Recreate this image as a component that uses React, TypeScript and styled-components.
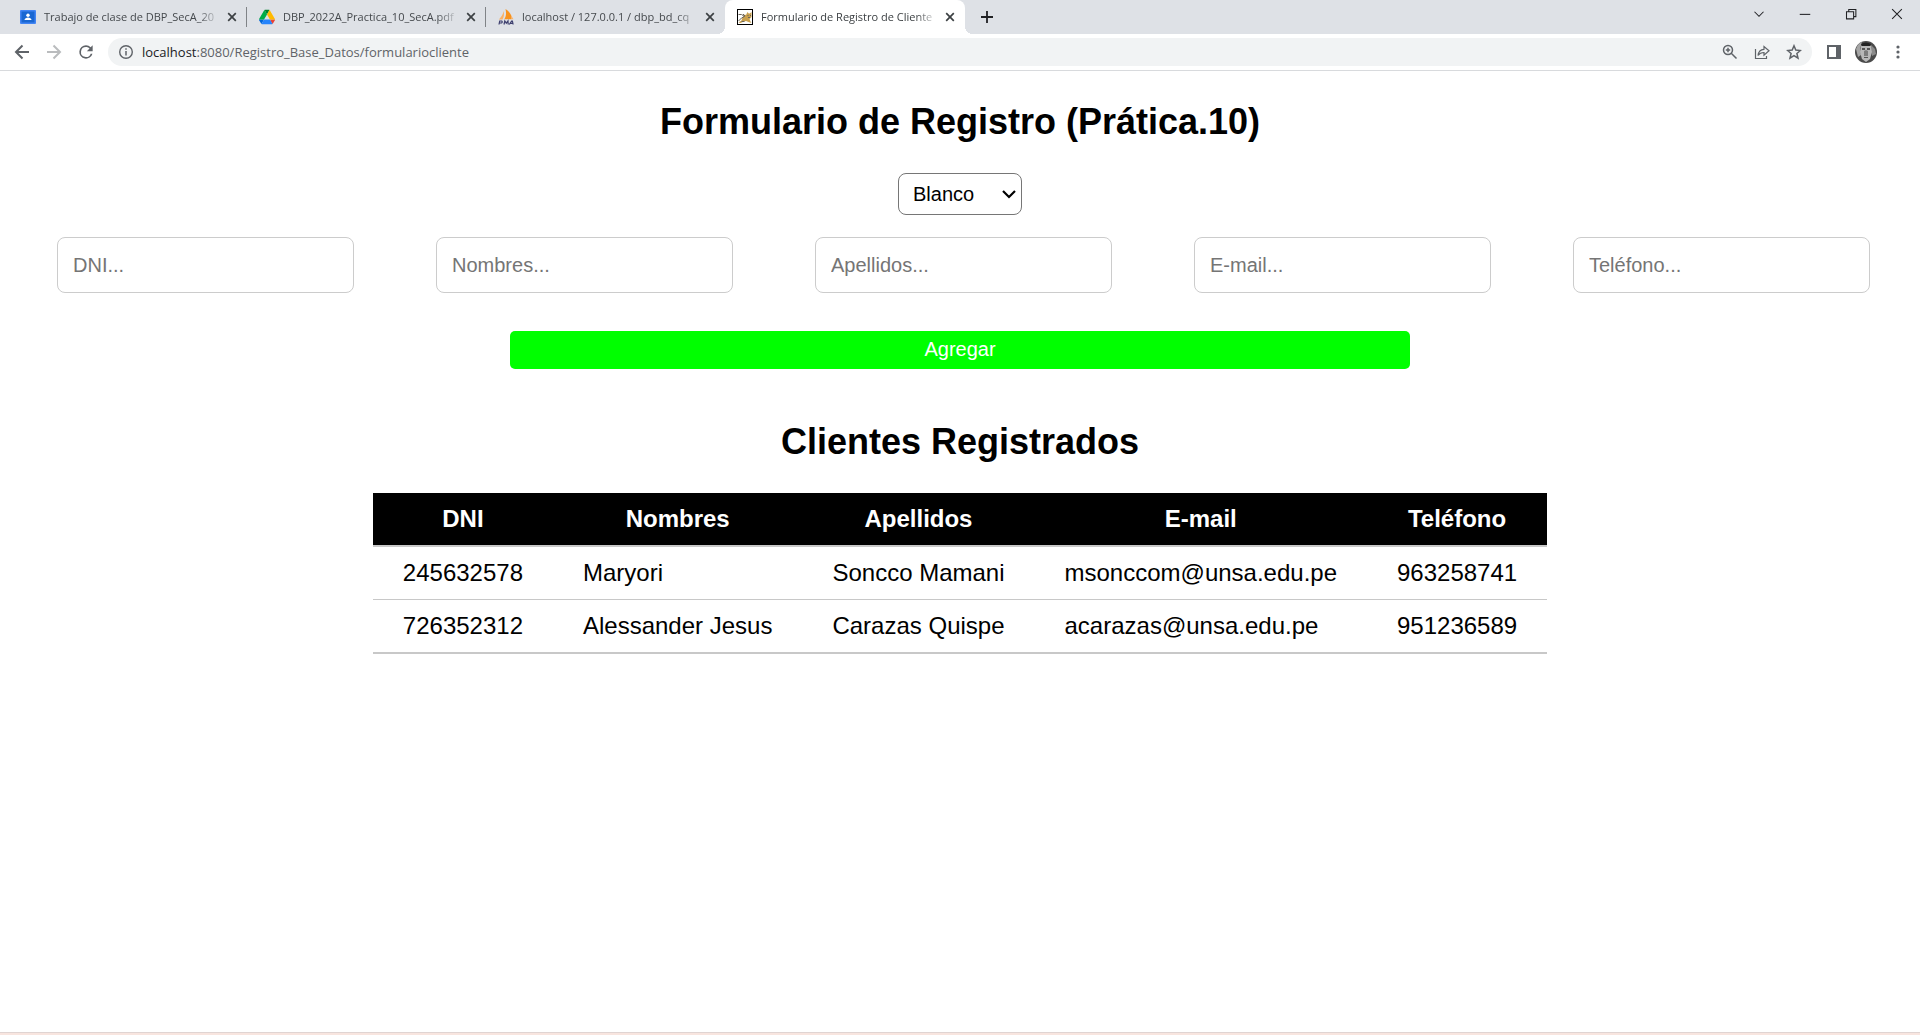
import React from "react";
import styled, { createGlobalStyle, css } from "styled-components";

const GlobalStyle = createGlobalStyle`
  * { box-sizing: border-box; }
  body {
    margin: 0;
    background: #fff;
    color: #000;
    font-family: "Liberation Sans", Arial, sans-serif;
  }
`;

const Window = styled.div`
  display: flex;
  flex-direction: column;
  min-height: 100vh;
`;

const TabStrip = styled.nav`
  display: flex;
  align-items: stretch;
  height: 34px;
  padding-left: 8px;
  background: #dee1e6;
  font: 12px/16px "Open Sans", "Segoe UI", sans-serif;
`;

const Tab = styled.div<{ $active?: boolean; $divided?: boolean }>`
  position: relative;
  display: flex;
  align-items: center;
  flex: 0 1 239px;
  min-width: 0;
  padding: 0 7px 0 12px;
  color: ${(p) => (p.$active ? "#3c4043" : "#45494d")};
  ${(p) =>
    p.$active &&
    css`
      flex-basis: 240px;
      background: #fff;
      border-radius: 8px 8px 0 0;
      &::before,
      &::after {
        content: "";
        position: absolute;
        bottom: 0;
        width: 8px;
        height: 8px;
      }
      &::before {
        right: 100%;
        background: radial-gradient(circle at 0 0, transparent 8px, #fff 8px);
      }
      &::after {
        left: 100%;
        background: radial-gradient(circle at 100% 0, transparent 8px, #fff 8px);
      }
    `}
  ${(p) =>
    p.$divided &&
    css`
      &::after {
        content: "";
        position: absolute;
        right: 0;
        top: 7px;
        width: 1px;
        height: 20px;
        background: #808387;
      }
    `}
`;

const TabTitle = styled.span`
  flex: 1;
  min-width: 0;
  margin: 0 4px 0 8px;
  overflow: hidden;
  white-space: nowrap;
  font-size: 11px;
  mask-image: linear-gradient(to right, #000 calc(100% - 22px), transparent);
`;

const IconButton = styled.button<{ $width?: number; $dim?: boolean }>`
  display: inline-flex;
  align-items: center;
  justify-content: center;
  flex: none;
  width: ${(p) => p.$width ?? 32}px;
  height: 100%;
  padding: 0;
  border: 0;
  background: none;
  color: ${(p) => (p.$dim ? "#babcbe" : "#5f6368")};
`;

const DarkButton = styled(IconButton)`
  color: #202124;
`;

const WindowControls = styled.div`
  display: flex;
  margin-left: auto;
  height: 28px;
`;

const Toolbar = styled.div`
  display: flex;
  align-items: center;
  height: 37px;
  padding: 0 6px;
  border-bottom: 1px solid #d8dadd;
`;

const AddressBar = styled.div`
  display: flex;
  align-items: center;
  flex: 1;
  height: 28px;
  margin: 0 6px;
  padding: 0 2px 0 10px;
  border-radius: 14px;
  background: #f1f3f4;
  color: #5f6368;
`;

const Address = styled.a`
  flex: 1;
  margin-left: 8px;
  color: #5f6368;
  text-decoration: none;
  font: 13px/18px "Open Sans", "Segoe UI", sans-serif;
  strong {
    font-weight: 400;
    color: #202124;
  }
`;

const Page = styled.main`
  flex: 1;
  padding: 30px 12px 0;
`;

const Heading = styled.h2`
  margin: 0;
  font-size: 36px;
  line-height: 42px;
  text-align: center;
`;

const ThemePicker = styled.div`
  display: grid;
  grid-template-columns: 124px;
  justify-content: center;
  align-items: center;
  margin: 30px 0 22px;
  > * {
    grid-area: 1 / 1;
  }
  svg {
    justify-self: end;
    margin-right: 6px;
    pointer-events: none;
  }
`;

const ThemeSelect = styled.select`
  appearance: none;
  width: 100%;
  height: 42px;
  padding: 0 30px 0 14px;
  border: 1px solid #767676;
  border-radius: 8px;
  background: #fff;
  color: #000;
  font: 20px/24px "Liberation Sans", Arial, sans-serif;
`;

const Fields = styled.div`
  display: grid;
  grid-template-columns: repeat(5, 1fr);
  margin-right: -3px;
  padding-left: 4px;
`;

const Field = styled.input`
  justify-self: center;
  width: 297px;
  max-width: 90%;
  height: 56px;
  padding: 0 15px;
  border: 1px solid #ccc;
  border-radius: 8px;
  background: #fff;
  color: #000;
  font: 20px/24px "Liberation Sans", Arial, sans-serif;
  &::placeholder {
    color: #757575;
    opacity: 1;
  }
`;

const SubmitButton = styled.button`
  display: block;
  width: 900px;
  max-width: 100%;
  height: 38px;
  margin: 38px auto 52px;
  padding: 0 0 2px;
  border: 0;
  border-radius: 5px;
  background: #0f0;
  color: #fff;
  font: 20px/24px "Liberation Sans", Arial, sans-serif;
`;

const ClientTable = styled.table`
  margin: 30px auto 0;
  border-spacing: 0;
  font-size: 24px;
  line-height: 28px;
  th,
  td {
    padding: 12px 30px;
  }
  thead th {
    background: #000;
    background-clip: padding-box;
    color: #fff;
    border-bottom: 2px solid #c8c8c8;
  }
  td {
    border-bottom: 1px solid #c8c8c8;
  }
  tbody tr:last-child td {
    border-bottom-width: 2px;
  }
`;

const DesktopEdge = styled.footer`
  height: 3px;
  border-top: 1px solid #e0d4d2;
  background: #f8e5df;
`;

const CloseIcon = () => (
  <svg width="10" height="10" viewBox="0 0 10 10" stroke="#3c4043" strokeWidth="1.7" fill="none">
    <path d="M1.2 1.2l7.6 7.6M8.800 1.200l-7.600 7.600" />
  </svg>
);

const ClassroomIcon = () => (
  <svg width="16" height="16" viewBox="0 0 16 16">
    <rect y="1" width="16" height="14" rx="1" fill="#4285f4" />
    <rect x="1.500" y="2.500" width="13" height="11" fill="#1967d2" />
    <circle cx="8" cy="6.300" r="1.700" fill="#fff" />
    <path d="M4.500 11c0-1.800 2-2.600 3.500-2.600s3.500.8 3.500 2.600z" fill="#fff" />
  </svg>
);

const DriveIcon = () => (
  <svg width="16" height="16" viewBox="0 0 87.3 78">
    <path d="m6.600 66.850 3.850 6.650c.8 1.400 1.950 2.500 3.300 3.300l13.750-23.800h-27.500c0 1.550.4 3.100 1.200 4.500z" fill="#0066da" />
    <path d="m43.650 25-13.750-23.800c-1.350.8-2.500 1.900-3.300 3.300l-25.400 44a9.060 9.060 0 0 0-1.200 4.500h27.500z" fill="#00ac47" />
    <path d="m73.550 76.800c1.350-.8 2.500-1.900 3.300-3.300l1.600-2.750 7.650-13.250c.8-1.400 1.200-2.950 1.200-4.500h-27.500l5.850 11.500z" fill="#ea4335" />
    <path d="m43.650 25 13.750-23.800c-1.350-.8-2.900-1.200-4.500-1.200h-18.500c-1.600 0-3.150.45-4.500 1.200z" fill="#00832d" />
    <path d="m59.800 53h-32.300l-13.750 23.800c1.350.8 2.900 1.200 4.500 1.200h50.800c1.600 0 3.150-.45 4.500-1.200z" fill="#2684fc" />
    <path d="m73.400 26.500-12.700-22c-.8-1.400-1.950-2.500-3.300-3.300l-13.750 23.800 16.150 28h27.450c0-1.550-.4-3.100-1.200-4.500z" fill="#ffba00" />
  </svg>
);

const PmaIcon = () => (
  <svg width="16" height="16" viewBox="0 0 16 16">
    <path d="M5.500 2c1 3 .5 6-1 8.500H.8C3 8 5 6 5.500 2z" fill="#f9b268" />
    <path d="M7.500 0c5 3.500 6.500 6.500 6 10.200H6.300C8.500 7 8.300 3.500 7.500 0z" fill="#f8931e" />
    <path d="M13 6c1 1.500 1.500 3 2.500 4.200H13.500z" fill="#f9b268" />
    <path d="M1 15.500l.7-3.500h2q1.200.9-.2 2H1.500M6 15.500l.8-3.500 1.500 2.200L10 12l.2 3.500M11.300 15.500l2.300-3.500h.8l.7 3.500M12.500 14.300h2.400" fill="none" stroke="#3d3f6e" strokeWidth="1.200" />
  </svg>
);

const TomcatIcon = () => (
  <svg width="16" height="16" viewBox="0 0 16 16">
    <rect x=".5" y=".5" width="15" height="15" fill="#fff" stroke="#000" />
    <path d="M7.500 5.500L9 6l1.500-3 1.200 1.500h1L14.500 3v5l-2 2 1 2.500 1 1.500-3-1-2.500-1-2 .5-3.500 1.500-2-.5 3-2 1-3z" fill="#c9a04e" />
    <path d="M1.500 5.500h3l3 2-3 1.500-3 3M6 5l2 2M4.500 12.500h3M10.500 6.500h1M13 6.500h1M11 8.500h2" fill="none" stroke="#6b655a" />
  </svg>
);

const tabs = [
  { title: "Trabajo de clase de DBP_SecA_20", Icon: ClassroomIcon, divided: true },
  { title: "DBP_2022A_Practica_10_SecA.pdf", Icon: DriveIcon, divided: true },
  { title: "localhost / 127.0.0.1 / dbp_bd_cq", Icon: PmaIcon },
  { title: "Formulario de Registro de Cliente", Icon: TomcatIcon, active: true },
];

const Stroke = ({ size = 16, width = 1.6, d }: { size?: number; width?: number; d: string }) => (
  <svg width={size} height={size} viewBox="0 0 16 16" fill="none" stroke="currentColor" strokeWidth={width}>
    <path d={d} />
  </svg>
);

const SelectArrow = () => (
  <svg width="14" height="10" viewBox="0 0 14 10" fill="none" stroke="#000" strokeWidth="2.200">
    <path d="M1 2l6 6 6-6" />
  </svg>
);

const InfoIcon = () => (
  <svg width="16" height="16" viewBox="0 0 16 16" fill="none" stroke="currentColor">
    <circle cx="8" cy="8" r="6.300" strokeWidth="1.400" />
    <path d="M8 7v4.500M8 4.300v1.500" strokeWidth="1.500" />
  </svg>
);

const ReloadIcon = () => (
  <svg width="20" height="20" viewBox="0 0 24 24" fill="currentColor">
    <path d="M17.650 6.350A7.958 7.958 0 0 0 12 4a8 8 0 1 0 7.730 10h-2.080A6 6 0 1 1 12 6c1.660 0 3.140.69 4.220 1.780L13 11h7V4z" />
  </svg>
);

const ShareIcon = () => (
  <svg width="16" height="16" viewBox="0 0 16 16" fill="none" stroke="currentColor" strokeWidth="1.200">
    <path d="M1.500 5v9.500h11V12" />
    <path d="M4 11.500C4.500 7.500 6.500 5.500 10 5.300V2.500l5 4.300-5 4.300V8.500C7.500 8.500 5.500 9.300 4 11.500z" />
  </svg>
);

const SidePanelIcon = () => (
  <svg width="14" height="14" viewBox="0 0 14 14">
    <path d="M0 0h14v14H0zM2 2v10h7V2z" fill="#5f6368" fillRule="evenodd" />
  </svg>
);

const AvatarIcon = () => (
  <svg width="22" height="22" viewBox="0 0 22 22">
    <circle cx="11" cy="11" r="11" fill="#4a4a4a" />
    <path d="M1 8q2-6 6-7L5 8l1 6-3 2z" fill="#a5a5a5" />
    <path d="M16 4l4 4 1 5-4 2z" fill="#8b8b8b" />
    <path d="M6 5q5-4 10 0l1 6-2 7-4 3-4-3-2-7z" fill="#b8b8b8" />
    <path d="M6 3q5-3 10 0l-1 2H7z" fill="#222" />
    <path d="M7 8h3M12 8h3" stroke="#333" strokeWidth="1.500" />
    <path d="M9 10l2-1 2 1v5H9z" fill="#7c7c7c" />
    <path d="M9 16.500h4" stroke="#555" />
  </svg>
);

const MenuDotsIcon = () => (
  <svg width="4" height="14" viewBox="0 0 4 14" fill="#5f6368">
    <circle cx="2" cy="2" r="1.600" />
    <circle cx="2" cy="7" r="1.600" />
    <circle cx="2" cy="12" r="1.600" />
  </svg>
);

const fields = ["DNI", "Nombres", "Apellidos", "E-mail", "Teléfono"];

const clients = [
  ["245632578", "Maryori", "Soncco Mamani", "msonccom@unsa.edu.pe", "963258741"],
  ["726352312", "Alessander Jesus", "Carazas Quispe", "acarazas@unsa.edu.pe", "951236589"],
];

export default function App() {
  return (
    <Window>
      <GlobalStyle />
      <TabStrip>
        {tabs.map(({ title, Icon, active, divided }) => (
          <Tab key={title} $active={active} $divided={divided}>
            <Icon />
            <TabTitle>{title}</TabTitle>
            <IconButton $width={16} aria-label="Cerrar pestaña">
              <CloseIcon />
            </IconButton>
          </Tab>
        ))}
        <DarkButton $width={44} aria-label="Nueva pestaña">
          <Stroke size={12} width={2.4} d="M8 0v16M0 8h16" />
        </DarkButton>
        <WindowControls>
          <DarkButton $width={46} aria-label="Buscar pestañas">
            <Stroke size={12} width={1.4} d="M2 5l6 6 6-6" />
          </DarkButton>
          <DarkButton $width={46} aria-label="Minimizar">
            <Stroke size={12} width={1.4} d="M1 8.500h14" />
          </DarkButton>
          <DarkButton $width={46} aria-label="Restaurar">
            <Stroke size={12} width={1.4} d="M2 5h9.500v9.500H2zM5 5V2h9.500v9.500h-3" />
          </DarkButton>
          <DarkButton $width={46} aria-label="Cerrar">
            <Stroke size={12} width={1.4} d="M1.500 1.500l13 13M14.500 1.500l-13 13" />
          </DarkButton>
        </WindowControls>
      </TabStrip>
      <Toolbar>
        <IconButton aria-label="Atrás">
          <Stroke width={2} d="M15 8H2M8.500 1.500L2 8l6.500 6.500" />
        </IconButton>
        <IconButton $dim aria-label="Adelante">
          <Stroke width={2} d="M1 8h13M7.500 1.500L14 8l-6.500 6.500" />
        </IconButton>
        <IconButton aria-label="Recargar">
          <ReloadIcon />
        </IconButton>
        <AddressBar>
          <InfoIcon />
          <Address href="#">
            <strong>localhost</strong>:8080/Registro_Base_Datos/formulariocliente
          </Address>
          <IconButton aria-label="Zoom">
            <Stroke width={1.5} d="M10.500 6a4.500 4.500 0 1 1-9 0a4.500 4.500 0 1 1 9 0M9.500 9.500l5 5M6 3.800v4.400M3.800 6h4.400" />
          </IconButton>
          <IconButton aria-label="Compartir">
            <ShareIcon />
          </IconButton>
          <IconButton aria-label="Añadir a marcadores">
            <Stroke width={1.5} d="M8 1.800l1.800 4.300 4.600.4-3.500 3 1.100 4.600L8 11.600l-4 2.500 1.100-4.600-3.500-3 4.600-.4z" />
          </IconButton>
        </AddressBar>
        <IconButton aria-label="Panel lateral">
          <SidePanelIcon />
        </IconButton>
        <IconButton aria-label="Perfil">
          <AvatarIcon />
        </IconButton>
        <IconButton aria-label="Menú">
          <MenuDotsIcon />
        </IconButton>
      </Toolbar>
      <Page>
        <form onSubmit={(e) => e.preventDefault()}>
          <Heading>Formulario de Registro (Prática.10)</Heading>
          <ThemePicker>
            <ThemeSelect aria-label="Color de fondo">
              <option>Blanco</option>
            </ThemeSelect>
            <SelectArrow />
          </ThemePicker>
          <Fields>
            {fields.map((name) => (
              <Field key={name} aria-label={name} placeholder={`${name}...`} />
            ))}
          </Fields>
          <SubmitButton type="submit">Agregar</SubmitButton>
        </form>
        <Heading>Clientes Registrados</Heading>
        <ClientTable>
          <thead>
            <tr>
              {fields.map((name) => (
                <th key={name} scope="col">{name}</th>
              ))}
            </tr>
          </thead>
          <tbody>
            {clients.map((row) => (
              <tr key={row[0]}>
                {row.map((cell) => (
                  <td key={cell}>{cell}</td>
                ))}
              </tr>
            ))}
          </tbody>
        </ClientTable>
      </Page>
      <DesktopEdge />
    </Window>
  );
}
